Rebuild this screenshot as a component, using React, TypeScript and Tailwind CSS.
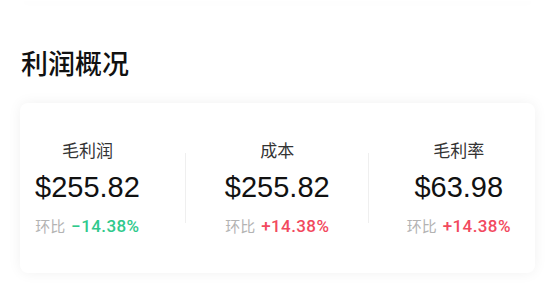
import React from 'react'

const font = { fontFamily: '"Liberation Sans", "Noto Sans CJK SC", sans-serif' }
const numFont = { fontFamily: 'Roboto, "Liberation Sans", sans-serif' }

type Stat = { label: string; value: string; change: string; up: boolean }

const stats: Stat[] = [
  { label: '毛利润', value: '$255.82', change: '−14.38%', up: false },
  { label: '成本', value: '$255.82', change: '+14.38%', up: true },
  { label: '毛利率', value: '$63.98', change: '+14.38%', up: true },
]

function StatCol({ s }: { s: Stat }) {
  return (
    <div className="flex flex-col items-center">
      <div className="text-[17px] leading-[24px] text-[#333333]">{s.label}</div>
      <div className="mt-[5px] text-[29px] leading-[36px] text-[#111111]">{s.value}</div>
      <div className="mt-[11px] flex items-baseline leading-[20px]">
        <span className="text-[15px] text-[#b3b3b3]">环比</span>
        <span
          className={`ml-[6px] text-[17px] tracking-[0.4px] font-medium ${s.up ? 'text-[#f2495e]' : 'text-[#2fc98c]'}`}
          style={numFont}
        >
          {s.change}
        </span>
      </div>
    </div>
  )
}

export default function App() {
  return (
    <div className="w-[555px] h-[284px] overflow-hidden bg-white" style={font}>
      {/* bottom edge of the card above */}
      <div className="mx-[20px] h-[1px] rounded-b-lg bg-white shadow-[0_2px_8px_rgba(0,0,0,0.05)]" />

      <h2 className="ml-[21px] mt-[46px] text-[27px] leading-[36px] font-medium text-[#111111]">
        利润概况
      </h2>

      <div className="mx-[20px] mt-[20px] h-[170px] rounded-lg bg-white shadow-[0_0_14px_rgba(0,0,0,0.06)] flex items-center pl-[15px]">
        <StatCol s={stats[0]} />
        <div className="ml-[45px] w-px h-[70px] bg-[#efefef]" />
        <div className="ml-[39px]">
          <StatCol s={stats[1]} />
        </div>
        <div className="ml-[38px] w-px h-[70px] bg-[#efefef]" />
        <div className="ml-[38px]">
          <StatCol s={stats[2]} />
        </div>
      </div>
    </div>
  )
}
